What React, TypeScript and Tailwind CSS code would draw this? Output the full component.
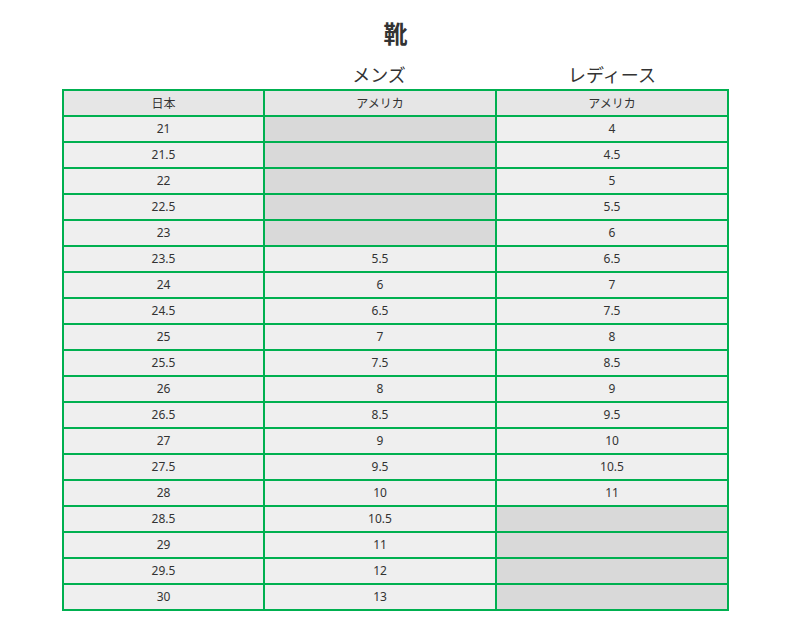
import React from "react";

const jp = ["21", "21.5", "22", "22.5", "23", "23.5", "24", "24.5", "25", "25.5", "26", "26.5", "27", "27.5", "28", "28.5", "29", "29.5", "30"];
const men = ["", "", "", "", "", "5.5", "6", "6.5", "7", "7.5", "8", "8.5", "9", "9.5", "10", "10.5", "11", "12", "13"];
const women = ["4", "4.5", "5", "5.5", "6", "6.5", "7", "7.5", "8", "8.5", "9", "9.5", "10", "10.5", "11", "", "", "", ""];

export default function App() {
  return (
    <div className="w-[790px] h-[633px] bg-white text-[#333333]" style={{ fontFamily: '"Noto Sans", "Noto Sans CJK JP", sans-serif' }}>
      <div className="w-[667px] ml-[62px]">
        <div className="h-[64px] flex items-center justify-center pt-[2px]">
          <h1 className="text-[24px] font-bold leading-none" style={{ fontFamily: '"Noto Sans CJK JP", sans-serif' }}>靴</h1>
        </div>
        <div className="grid grid-cols-[201px_232px_234px] h-[25px] items-center text-[18px] leading-none" style={{ fontFamily: '"Noto Sans CJK JP", sans-serif' }}>
          <div></div>
          <div className="text-center pb-[5px]">メンズ</div>
          <div className="text-center pb-[5px]">レディース</div>
        </div>
        <div className="grid grid-cols-[199px_230px_230px] gap-[2px] bg-[#00b050] p-[2px] text-[12px]">
          <div className="h-[24px] bg-[#e6e6e6] flex items-center justify-center pb-[1px]" style={{ fontFamily: '"Noto Sans CJK JP", sans-serif' }}>日本</div>
          <div className="h-[24px] bg-[#e6e6e6] flex items-center justify-center pb-[1px]" style={{ fontFamily: '"Noto Sans CJK JP", sans-serif' }}>アメリカ</div>
          <div className="h-[24px] bg-[#e6e6e6] flex items-center justify-center pb-[1px]" style={{ fontFamily: '"Noto Sans CJK JP", sans-serif' }}>アメリカ</div>
          {jp.map((j, i) => (
            <React.Fragment key={j}>
              <div className="h-[24px] bg-[#efefef] flex items-center justify-center pb-[1px]">{j}</div>
              <div className={`h-[24px] flex items-center justify-center pb-[1px] ${men[i] ? "bg-[#efefef]" : "bg-[#d9d9d9]"}`}>{men[i]}</div>
              <div className={`h-[24px] flex items-center justify-center pb-[1px] ${women[i] ? "bg-[#efefef]" : "bg-[#d9d9d9]"}`}>{women[i]}</div>
            </React.Fragment>
          ))}
        </div>
      </div>
    </div>
  );
}
